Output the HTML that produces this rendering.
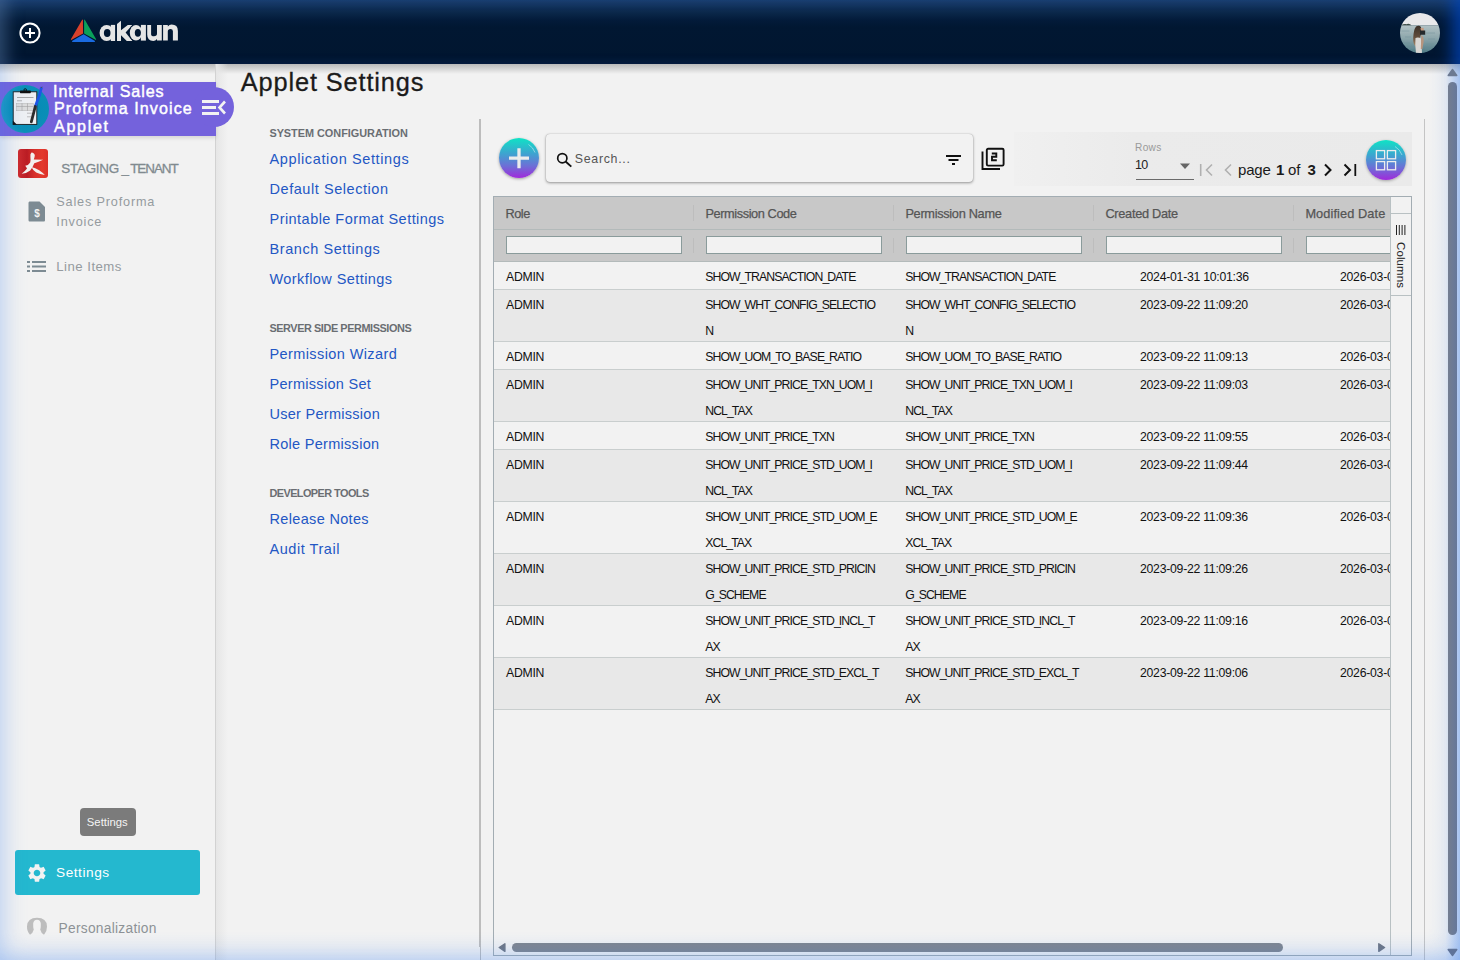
<!DOCTYPE html>
<html><head><meta charset="utf-8">
<style>
*{box-sizing:border-box;margin:0;padding:0}
html,body{width:1460px;height:960px;overflow:hidden;background:#f2f2f2;font-family:"Liberation Sans",sans-serif}
.a{position:absolute;white-space:nowrap}
#hdr{position:absolute;left:0;top:0;width:1460px;height:64px;background:linear-gradient(#193b65 0,#13335c 6px,#0a2749 13px,#031b3a 20px,#011732 27px,#011630 60px,#000f26 64px);overflow:hidden;z-index:10}
#hdr .gl{position:absolute;left:0;top:0;width:1460px;height:64px;box-shadow:inset 16px 0 16px -9px rgba(85,120,165,.5), inset -16px 0 16px -8px rgba(0,70,190,.75)}
#hshadow{position:absolute;left:0;top:64px;width:1460px;height:10px;background:linear-gradient(#b9b9b9,rgba(242,242,242,0))}
#sb{position:absolute;left:0;top:64px;width:216px;height:896px;border-right:1px solid #d2d2d2}
#sbsh{position:absolute;left:216px;top:64px;width:12px;height:896px;background:linear-gradient(90deg,#e6e6e6,rgba(242,242,242,0))}
.lnk{position:absolute;left:269.5px;font-size:14.5px;letter-spacing:.4px;color:#2357c4;white-space:nowrap}
.sec{position:absolute;left:269.4px;font-size:10.9px;letter-spacing:-.2px;font-weight:bold;color:#6a6e72;white-space:nowrap}
.th{position:absolute;top:205.9px;font-size:12.75px;letter-spacing:-.46px;color:#555;white-space:nowrap;-webkit-text-stroke:.25px #555}
.td{position:absolute;font-size:12.25px;color:#111;white-space:nowrap}
.cd{letter-spacing:-.9px}.cd i{font-style:normal;letter-spacing:-2px}.ad{letter-spacing:-.28px}.dt{letter-spacing:-.26px}
</style></head><body>

<!-- header -->
<div id="hdr"><div class="gl"></div>
  <svg class="a" style="left:19px;top:22px" width="22" height="22" viewBox="0 0 22 22"><circle cx="11" cy="11" r="9.6" fill="none" stroke="#fff" stroke-width="2"/><path d="M11 6v10M6 11h10" stroke="#fff" stroke-width="2"/></svg>
  <svg class="a" style="left:0;top:0" width="200" height="64" viewBox="0 0 200 64">
    <path d="M82.9 19.6 L83.1 33.4 L71.2 40 Q70.6 39.9 71 39.1 L81.9 20.2 Q82.3 19.5 82.9 19.6Z" fill="#d9412b"/>
    <path d="M84.1 19.6 L84.1 33.4 L96 40 Q96.4 39.9 96 39.1 L85.1 20.2 Q84.7 19.5 84.1 19.6Z" fill="#0aa05a"/>
    <path d="M83.6 34.3 L95 40.9 Q95.3 42 94.2 42 L72.8 42 Q71.7 42 72 40.9 Z" fill="#1a6be2"/>
    <g fill="#e5e5e5">
      <ellipse cx="106.6" cy="32.95" rx="7" ry="8.05"/><rect x="110.8" y="24.9" width="4.3" height="16.1"/>
      <path d="M117 23.9 L121 20.8 L121 41 L117 41Z"/>
      <path d="M121 30.2 L127.8 24.9 L132.4 24.9 L125.6 32.6 L132.4 41 L126.8 41 L121 35.3Z"/>
      <ellipse cx="136" cy="32.75" rx="7.2" ry="8.9" fill="#011732"/>
      <ellipse cx="136" cy="32.75" rx="6.2" ry="7.85"/><rect x="140.9" y="24.9" width="5" height="15.7"/>
      <path d="M147.2 24.9 H151.1 V34.2 Q151.1 36.3 154 36.3 Q157 36.3 157 33.5 V24.9 H161.8 V40.6 H157 V39 Q155.5 40.9 153.3 40.9 Q147.2 40.9 147.2 34.5Z"/>
      <path d="M163.1 40.6 V24.9 H167.8 V26.5 Q169.3 24.6 171.6 24.6 Q177.9 24.6 177.9 31 V40.6 H172.9 V31.3 Q172.9 29.1 170.4 29.1 Q167.8 29.1 167.8 31.6 V40.6Z"/>
    </g>
    <g fill="#011732"><ellipse cx="107.2" cy="33.05" rx="3.3" ry="4"/><ellipse cx="137.85" cy="32.8" rx="3.05" ry="3.9"/></g>
  </svg>
  <svg class="a" style="left:1400px;top:13px" width="40" height="40" viewBox="0 0 40 40">
    <defs><clipPath id="avc"><circle cx="20" cy="20" r="20"/></clipPath>
    <linearGradient id="sea" x1="0" y1="0" x2="0" y2="1"><stop offset="0" stop-color="#b3c2c5"/><stop offset=".45" stop-color="#8ea7ac"/><stop offset="1" stop-color="#4e7a85"/></linearGradient>
    <linearGradient id="hair" x1="0" y1="0" x2="0" y2="1"><stop offset="0" stop-color="#3b3129"/><stop offset=".5" stop-color="#5e4a3a"/><stop offset="1" stop-color="#a98c6c"/></linearGradient></defs>
    <g clip-path="url(#avc)">
      <rect width="40" height="12.2" fill="#e9e9eb"/>
      <rect y="12.2" width="40" height="28" fill="url(#sea)"/>
      <path d="M1.5 18h8M26 20h9M5 24h6M28 26h7M3 30h7M26 31h8M8 35h6M25 36h8" stroke="#6f9199" stroke-width=".8" opacity=".6"/>
      <path d="M1 12.3 Q4 10.6 6.5 11.2 Q8.5 10.3 10.5 11.6 L11.5 12.3Z" fill="#3a4a44"/>
      <path d="M16 13.5 Q19 12 21 14 L21.5 20 Q20 24 19 28 Q17.5 33 15.5 33.5 Q13 31 13.2 25 Q13.5 17 16 13.5Z" fill="url(#hair)"/>
      <path d="M15.5 25 Q18.5 24 21 25.5 L22 40 L16 40 Q14.8 32 15.5 25Z" fill="#d9d6d3"/>
      <path d="M20.5 15 L23.5 14.8 L24.5 19.5 L21.5 20.5Z" fill="#c49c84"/>
      <path d="M20 17.6 L25.2 17.6 L25.2 21.8 L20 21.8Z" fill="#25292c"/>
      <path d="M21.3 22 Q24 23.5 23.6 29 L22.3 36 L20.8 36 Z" fill="#b8957e"/>
    </g>
  </svg>
</div>
<div id="hshadow"></div>

<!-- sidebar -->
<div id="sb"></div>
<div id="sbsh"></div>

<!-- applet band -->
<div class="a" style="left:0;top:82px;width:216px;height:54px;background:#7462dc;box-shadow:0 2px 4px rgba(0,0,0,.12)"></div>
<div class="a" style="left:194px;top:87px;width:40px;height:40px;border-radius:50%;background:#7462dc"></div>
<div class="a" style="left:1px;top:85px;width:48px;height:48px;border-radius:50%;background:radial-gradient(circle at 70% 50%,#078bb5,#0b90b8 60%,#2aa0c9)"></div>
<svg class="a" style="left:0;top:82px" width="50" height="54" viewBox="0 82 50 54">
  <rect x="13.2" y="91.8" width="23.6" height="32.6" fill="#eef0f3" stroke="#1a1a1a" stroke-width=".9"/>
  <path d="M12.8 120.6 L12.8 124.8 L17 124.8 Z" fill="#111"/>
  <rect x="20" y="90.6" width="10.8" height="2.6" rx=".6" fill="#111"/>
  <circle cx="25.2" cy="90" r="1.3" fill="none" stroke="#111" stroke-width=".9"/>
  <path d="M17 97.5h16.5" stroke="#777" stroke-width=".6"/><path d="M17 100.8h5" stroke="#888" stroke-width=".6"/>
  <rect x="16.3" y="103.3" width="17" height="7.5" fill="#dcdcdc" stroke="#aaa" stroke-width=".4"/>
  <path d="M22 103.3v7.5M27.5 103.3v7.5M16.3 106.5h17" stroke="#999" stroke-width=".5"/>
  <path d="M27 113.2h5M27 116.8h4" stroke="#999" stroke-width=".6"/>
  <path d="M41.3 88.2 L39.5 95 L35.3 106.5" stroke="#1c55e6" stroke-width="2.8" fill="none" stroke-linecap="round"/>
  <path d="M41 88 l1.2 -1.2" stroke="#555" stroke-width="1"/>
  <path d="M35.3 106.5 L31.3 121.8" stroke="#2c2c2c" stroke-width="2.8" stroke-linecap="round"/>
</svg>
<div class="a" style="left:53px;top:81.7px;font-size:16.09px;letter-spacing:.95px;color:#fff;-webkit-text-stroke:.45px #fff">Internal Sales</div><div class="a" style="left:54px;top:99.3px;font-size:16.09px;letter-spacing:1.08px;color:#fff;-webkit-text-stroke:.45px #fff">Proforma Invoice</div><div class="a" style="left:54px;top:117.4px;font-size:16.09px;letter-spacing:1.7px;color:#fff;-webkit-text-stroke:.45px #fff">Applet</div>
<svg class="a" style="left:202px;top:100px" width="24" height="16" viewBox="0 0 24 16">
  <path d="M0 1.5h17M0 7.5h14M0 13.5h17" stroke="#f2f2f2" stroke-width="3"/>
  <path d="M23 1.5 L17.5 7.5 L23 13.5" stroke="#f2f2f2" stroke-width="2.6" fill="none"/>
</svg>

<!-- tenant -->
<div class="a" style="left:18px;top:149px;width:30px;height:29px;border-radius:3px;background:linear-gradient(90deg,#d02a2c 0,#bb1d24 30%,#d7302b 55%,#e3392c 80%,#dc3029)"></div>
<svg class="a" style="left:18px;top:149.7px" width="30" height="28.3" viewBox="0 0 30 28.3"><path d="M13.5 2.5 Q16.5 2.8 16.8 5.5 Q16.6 7.5 15.8 9.4 L25.1 9.8 Q20.5 12 16.3 13.3 Q14.7 17.5 12.2 20.5 Q8.5 23.6 3.6 23.8 Q7 21.5 9 18.6 Q8.2 17 7.2 15.8 Q10.6 15.4 12.2 12.5 Q12.8 9.5 12.4 6.5 Q12 3.8 13.5 2.5Z M13.4 17 Q17.2 17.6 21.2 20.3 Q24.6 22.7 26.8 25 Q22 24.3 18.2 22.4 Q15 20.6 13.4 17Z" fill="#f3f0ee"/></svg>
<div class="a" id="tenant" style="left:61.3px;top:160.8px;font-size:13.45px;letter-spacing:-.26px;color:#808a8f;-webkit-text-stroke:.3px #808a8f">STAGING<span style="margin:0 1.5px 0 2.5px">_</span><span style="letter-spacing:-1.05px">TENANT</span></div>

<svg class="a" style="left:28px;top:201px" width="18" height="21" viewBox="0 0 18 21"><path d="M2 0.5h9.5l5.5 5.5v13c0 1-.5 1.5-1.5 1.5h-13.5c-1 0-1.5-.5-1.5-1.5v-17c0-1 .5-1.5 1.5-1.5z" fill="#7d8b93"/><text x="9" y="15.5" font-family="Liberation Sans" font-weight="bold" font-size="10" fill="#f2f2f2" text-anchor="middle">$</text></svg>
<div class="a" id="spi" style="left:56.3px;top:195px;font-size:12.7px;letter-spacing:.82px;color:#959b9f">Sales Proforma</div><div class="a" style="left:56.3px;top:215px;font-size:12.7px;letter-spacing:.82px;color:#959b9f">Invoice</div>
<svg class="a" style="left:27px;top:261px" width="20" height="12" viewBox="0 0 20 12"><path d="M0 1h3M5 1h14M0 5.5h3M5 5.5h14M0 10h3M5 10h14" stroke="#7d8b93" stroke-width="1.8"/></svg>
<div class="a" id="li" style="left:56.3px;top:258.9px;font-size:13.2px;letter-spacing:.47px;color:#959b9f">Line Items</div>

<!-- tooltip / settings / personalization -->
<div class="a" style="left:80px;top:808px;width:56px;height:28px;border-radius:4px;background:#7b7b7b"></div>
<div class="a" id="tt" style="left:86.8px;top:815.5px;font-size:11.27px;letter-spacing:.03px;color:#f4f4f4">Settings</div>
<div class="a" style="left:15px;top:850px;width:185px;height:45px;border-radius:3px;background:#24b8cf"></div>
<svg class="a" style="left:26px;top:862px" width="22" height="22" viewBox="0 0 24 24"><path fill="#f2f2f2" d="M19.14 12.94c.04-.3.06-.61.06-.94 0-.32-.02-.64-.07-.94l2.03-1.58a.49.49 0 0 0 .12-.61l-1.92-3.32a.488.488 0 0 0-.59-.22l-2.39.96c-.5-.38-1.03-.7-1.62-.94l-.36-2.54a.484.484 0 0 0-.48-.41h-3.84c-.24 0-.43.17-.47.41l-.36 2.54c-.59.24-1.13.57-1.62.94l-2.39-.96c-.22-.08-.47 0-.59.22L2.74 8.87c-.12.21-.08.47.12.61l2.03 1.58c-.05.3-.09.63-.09.94s.02.64.07.94l-2.03 1.58a.49.49 0 0 0-.12.61l1.92 3.32c.12.22.37.29.59.22l2.39-.96c.5.38 1.03.7 1.62.94l.36 2.54c.05.24.24.41.48.41h3.84c.24 0 .44-.17.47-.41l.36-2.54c.59-.24 1.13-.56 1.62-.94l2.39.96c.22.08.47 0 .59-.22l1.92-3.32c.12-.22.07-.47-.12-.61l-2.01-1.58zM12 15.6c-1.98 0-3.6-1.62-3.6-3.6s1.62-3.6 3.6-3.6 3.6 1.62 3.6 3.6-1.62 3.6-3.6 3.6z"/></svg>
<div class="a" id="set" style="left:56px;top:864.5px;font-size:13.66px;letter-spacing:.54px;color:#fff">Settings</div>
<svg class="a" style="left:20px;top:910px" width="36" height="30" viewBox="20 910 36 30"><path d="M30 934.8 Q26.8 931 27 926.5 Q27.3 917.8 37 917.8 Q46.8 917.8 47 926.5 Q47.2 931 44 934.8 Q41 933 40.2 929.5 Q40.8 928 40.8 926 L40.8 923.5 Q40.5 919.7 37 919.7 Q33.5 919.7 33.2 923.5 L33.2 926 Q33.2 928 33.8 929.5 Q33 933 30 934.8Z" fill="#bdbdbd"/></svg>
<div class="a" id="pers" style="left:58.5px;top:921px;font-size:13.77px;letter-spacing:.27px;color:#8d9296">Personalization</div>

<!-- middle panel -->
<div class="a" id="title" style="left:240.8px;top:67.7px;font-size:25.36px;letter-spacing:.86px;color:#1b1b1b;-webkit-text-stroke:.3px #1b1b1b">Applet Settings</div>
<div class="a" style="left:479px;top:119px;width:2px;height:828px;background:#bdbdbd"></div><div class="a" style="left:480px;top:947px;width:1px;height:13px;background:#bdbdbd"></div>
<div class="sec" style="top:127.3px;letter-spacing:-0.026px">SYSTEM CONFIGURATION</div>
<div class="lnk" style="top:151px;letter-spacing:0.626px">Application Settings</div>
<div class="lnk" style="top:181px;letter-spacing:0.556px">Default Selection</div>
<div class="lnk" style="top:211px;letter-spacing:0.458px">Printable Format Settings</div>
<div class="lnk" style="top:241px;letter-spacing:0.564px">Branch Settings</div>
<div class="lnk" style="top:271px;letter-spacing:0.425px">Workflow Settings</div>
<div class="sec" style="top:322.2px;letter-spacing:-0.427px">SERVER SIDE PERMISSIONS</div>
<div class="lnk" style="top:346px;letter-spacing:0.400px">Permission Wizard</div>
<div class="lnk" style="top:376px;letter-spacing:0.292px">Permission Set</div>
<div class="lnk" style="top:406px;letter-spacing:0.279px">User Permission</div>
<div class="lnk" style="top:436px;letter-spacing:0.286px">Role Permission</div>
<div class="sec" style="top:487px;letter-spacing:-0.550px">DEVELOPER TOOLS</div>
<div class="lnk" style="top:511px;letter-spacing:0.333px">Release Notes</div>
<div class="lnk" style="top:541px;letter-spacing:0.550px">Audit Trail</div>

<!-- content right border -->
<div class="a" style="left:1424px;top:119px;width:1px;height:841px;background:#c4c4c4"></div>

<!-- TABLE START -->
<div class="a" style="left:493px;top:196px;width:919px;height:760px;border:1px solid #a3adb3;background:#f2f2f2;overflow:hidden">
</div>
<div class="a" style="left:494px;top:197px;width:896px;height:758px;overflow:hidden"><div class="a" style="left:-494px;top:-197px;width:1460px;height:960px">
<div class="a" style="left:494px;top:197px;width:896px;height:32px;background:#c8c8c8"></div>
<div class="a" style="left:494px;top:229px;width:896px;height:1px;background:#b3baba"></div>
<div class="a" style="left:494px;top:230px;width:896px;height:31px;background:#c8c8c8"></div>
<div class="a" style="left:494px;top:261px;width:896px;height:1px;background:#b3baba"></div>
<div class="th" style="left:505.4px;letter-spacing:-0.46px">Role</div>
<div class="a" style="left:506px;top:236px;width:176px;height:18px;border:1px solid #8a9b9b;background:#f2f2f2"></div>
<div class="th" style="left:705.4px;letter-spacing:-0.4px">Permission Code</div>
<div class="a" style="left:706px;top:236px;width:176px;height:18px;border:1px solid #8a9b9b;background:#f2f2f2"></div>
<div class="a" style="left:693px;top:205px;width:1px;height:16px;background:#bdbdbd"></div>
<div class="a" style="left:693px;top:238px;width:1px;height:15px;background:#bdbdbd"></div>
<div class="th" style="left:905.4px;letter-spacing:-0.3px">Permission Name</div>
<div class="a" style="left:906px;top:236px;width:176px;height:18px;border:1px solid #8a9b9b;background:#f2f2f2"></div>
<div class="a" style="left:893px;top:205px;width:1px;height:16px;background:#bdbdbd"></div>
<div class="a" style="left:893px;top:238px;width:1px;height:15px;background:#bdbdbd"></div>
<div class="th" style="left:1105.4px;letter-spacing:-0.28px">Created Date</div>
<div class="a" style="left:1106px;top:236px;width:176px;height:18px;border:1px solid #8a9b9b;background:#f2f2f2"></div>
<div class="a" style="left:1093px;top:205px;width:1px;height:16px;background:#bdbdbd"></div>
<div class="a" style="left:1093px;top:238px;width:1px;height:15px;background:#bdbdbd"></div>
<div class="th" style="left:1305.4px;letter-spacing:0.1px">Modified Date</div>
<div class="a" style="left:1306px;top:236px;width:176px;height:18px;border:1px solid #8a9b9b;background:#f2f2f2"></div>
<div class="a" style="left:1293px;top:205px;width:1px;height:16px;background:#bdbdbd"></div>
<div class="a" style="left:1293px;top:238px;width:1px;height:15px;background:#bdbdbd"></div>
<div class="a" style="left:494px;top:262px;width:896px;height:27px;background:#f2f2f2"></div>
<div class="a" style="left:494px;top:289px;width:896px;height:1px;background:#c9cece"></div>
<div class="td ad" style="left:506px;top:270.4px">ADMIN</div>
<div class="td cd" style="left:705.2px;top:270.4px">SHOW<i>_</i>TRANSACTION<i>_</i>DATE</div>
<div class="td cd" style="left:905.2px;top:270.4px">SHOW<i>_</i>TRANSACTION<i>_</i>DATE</div>
<div class="td dt" style="left:1140px;top:270.4px">2024-01-31 10:01:36</div>
<div class="td dt" style="left:1340px;top:270.4px;width:50px;overflow:hidden">2026-03-06 10:00:00</div>
<div class="a" style="left:494px;top:290px;width:896px;height:51px;background:#e8e8e8"></div>
<div class="a" style="left:494px;top:341px;width:896px;height:1px;background:#c9cece"></div>
<div class="td ad" style="left:506px;top:298.4px">ADMIN</div>
<div class="td cd" style="left:705.2px;top:298.4px">SHOW<i>_</i>WHT<i>_</i>CONFIG<i>_</i>SELECTIO</div>
<div class="td cd" style="left:705.2px;top:324.4px">N</div>
<div class="td cd" style="left:905.2px;top:298.4px">SHOW<i>_</i>WHT<i>_</i>CONFIG<i>_</i>SELECTIO</div>
<div class="td cd" style="left:905.2px;top:324.4px">N</div>
<div class="td dt" style="left:1140px;top:298.4px">2023-09-22 11:09:20</div>
<div class="td dt" style="left:1340px;top:298.4px;width:50px;overflow:hidden">2026-03-06 10:00:00</div>
<div class="a" style="left:494px;top:342px;width:896px;height:27px;background:#f2f2f2"></div>
<div class="a" style="left:494px;top:369px;width:896px;height:1px;background:#c9cece"></div>
<div class="td ad" style="left:506px;top:350.4px">ADMIN</div>
<div class="td cd" style="left:705.2px;top:350.4px">SHOW<i>_</i>UOM<i>_</i>TO<i>_</i>BASE<i>_</i>RATIO</div>
<div class="td cd" style="left:905.2px;top:350.4px">SHOW<i>_</i>UOM<i>_</i>TO<i>_</i>BASE<i>_</i>RATIO</div>
<div class="td dt" style="left:1140px;top:350.4px">2023-09-22 11:09:13</div>
<div class="td dt" style="left:1340px;top:350.4px;width:50px;overflow:hidden">2026-03-06 10:00:00</div>
<div class="a" style="left:494px;top:370px;width:896px;height:51px;background:#e8e8e8"></div>
<div class="a" style="left:494px;top:421px;width:896px;height:1px;background:#c9cece"></div>
<div class="td ad" style="left:506px;top:378.4px">ADMIN</div>
<div class="td cd" style="left:705.2px;top:378.4px">SHOW<i>_</i>UNIT<i>_</i>PRICE<i>_</i>TXN<i>_</i>UOM<i>_</i>I</div>
<div class="td cd" style="left:705.2px;top:404.4px">NCL<i>_</i>TAX</div>
<div class="td cd" style="left:905.2px;top:378.4px">SHOW<i>_</i>UNIT<i>_</i>PRICE<i>_</i>TXN<i>_</i>UOM<i>_</i>I</div>
<div class="td cd" style="left:905.2px;top:404.4px">NCL<i>_</i>TAX</div>
<div class="td dt" style="left:1140px;top:378.4px">2023-09-22 11:09:03</div>
<div class="td dt" style="left:1340px;top:378.4px;width:50px;overflow:hidden">2026-03-06 10:00:00</div>
<div class="a" style="left:494px;top:422px;width:896px;height:27px;background:#f2f2f2"></div>
<div class="a" style="left:494px;top:449px;width:896px;height:1px;background:#c9cece"></div>
<div class="td ad" style="left:506px;top:430.4px">ADMIN</div>
<div class="td cd" style="left:705.2px;top:430.4px">SHOW<i>_</i>UNIT<i>_</i>PRICE<i>_</i>TXN</div>
<div class="td cd" style="left:905.2px;top:430.4px">SHOW<i>_</i>UNIT<i>_</i>PRICE<i>_</i>TXN</div>
<div class="td dt" style="left:1140px;top:430.4px">2023-09-22 11:09:55</div>
<div class="td dt" style="left:1340px;top:430.4px;width:50px;overflow:hidden">2026-03-06 10:00:00</div>
<div class="a" style="left:494px;top:450px;width:896px;height:51px;background:#e8e8e8"></div>
<div class="a" style="left:494px;top:501px;width:896px;height:1px;background:#c9cece"></div>
<div class="td ad" style="left:506px;top:458.4px">ADMIN</div>
<div class="td cd" style="left:705.2px;top:458.4px">SHOW<i>_</i>UNIT<i>_</i>PRICE<i>_</i>STD<i>_</i>UOM<i>_</i>I</div>
<div class="td cd" style="left:705.2px;top:484.4px">NCL<i>_</i>TAX</div>
<div class="td cd" style="left:905.2px;top:458.4px">SHOW<i>_</i>UNIT<i>_</i>PRICE<i>_</i>STD<i>_</i>UOM<i>_</i>I</div>
<div class="td cd" style="left:905.2px;top:484.4px">NCL<i>_</i>TAX</div>
<div class="td dt" style="left:1140px;top:458.4px">2023-09-22 11:09:44</div>
<div class="td dt" style="left:1340px;top:458.4px;width:50px;overflow:hidden">2026-03-06 10:00:00</div>
<div class="a" style="left:494px;top:502px;width:896px;height:51px;background:#f2f2f2"></div>
<div class="a" style="left:494px;top:553px;width:896px;height:1px;background:#c9cece"></div>
<div class="td ad" style="left:506px;top:510.4px">ADMIN</div>
<div class="td cd" style="left:705.2px;top:510.4px">SHOW<i>_</i>UNIT<i>_</i>PRICE<i>_</i>STD<i>_</i>UOM<i>_</i>E</div>
<div class="td cd" style="left:705.2px;top:536.4px">XCL<i>_</i>TAX</div>
<div class="td cd" style="left:905.2px;top:510.4px">SHOW<i>_</i>UNIT<i>_</i>PRICE<i>_</i>STD<i>_</i>UOM<i>_</i>E</div>
<div class="td cd" style="left:905.2px;top:536.4px">XCL<i>_</i>TAX</div>
<div class="td dt" style="left:1140px;top:510.4px">2023-09-22 11:09:36</div>
<div class="td dt" style="left:1340px;top:510.4px;width:50px;overflow:hidden">2026-03-06 10:00:00</div>
<div class="a" style="left:494px;top:554px;width:896px;height:51px;background:#e8e8e8"></div>
<div class="a" style="left:494px;top:605px;width:896px;height:1px;background:#c9cece"></div>
<div class="td ad" style="left:506px;top:562.4px">ADMIN</div>
<div class="td cd" style="left:705.2px;top:562.4px">SHOW<i>_</i>UNIT<i>_</i>PRICE<i>_</i>STD<i>_</i>PRICIN</div>
<div class="td cd" style="left:705.2px;top:588.4px">G<i>_</i>SCHEME</div>
<div class="td cd" style="left:905.2px;top:562.4px">SHOW<i>_</i>UNIT<i>_</i>PRICE<i>_</i>STD<i>_</i>PRICIN</div>
<div class="td cd" style="left:905.2px;top:588.4px">G<i>_</i>SCHEME</div>
<div class="td dt" style="left:1140px;top:562.4px">2023-09-22 11:09:26</div>
<div class="td dt" style="left:1340px;top:562.4px;width:50px;overflow:hidden">2026-03-06 10:00:00</div>
<div class="a" style="left:494px;top:606px;width:896px;height:51px;background:#f2f2f2"></div>
<div class="a" style="left:494px;top:657px;width:896px;height:1px;background:#c9cece"></div>
<div class="td ad" style="left:506px;top:614.4px">ADMIN</div>
<div class="td cd" style="left:705.2px;top:614.4px">SHOW<i>_</i>UNIT<i>_</i>PRICE<i>_</i>STD<i>_</i>INCL<i>_</i>T</div>
<div class="td cd" style="left:705.2px;top:640.4px">AX</div>
<div class="td cd" style="left:905.2px;top:614.4px">SHOW<i>_</i>UNIT<i>_</i>PRICE<i>_</i>STD<i>_</i>INCL<i>_</i>T</div>
<div class="td cd" style="left:905.2px;top:640.4px">AX</div>
<div class="td dt" style="left:1140px;top:614.4px">2023-09-22 11:09:16</div>
<div class="td dt" style="left:1340px;top:614.4px;width:50px;overflow:hidden">2026-03-06 10:00:00</div>
<div class="a" style="left:494px;top:658px;width:896px;height:51px;background:#e8e8e8"></div>
<div class="a" style="left:494px;top:709px;width:896px;height:1px;background:#c9cece"></div>
<div class="td ad" style="left:506px;top:666.4px">ADMIN</div>
<div class="td cd" style="left:705.2px;top:666.4px">SHOW<i>_</i>UNIT<i>_</i>PRICE<i>_</i>STD<i>_</i>EXCL<i>_</i>T</div>
<div class="td cd" style="left:705.2px;top:692.4px">AX</div>
<div class="td cd" style="left:905.2px;top:666.4px">SHOW<i>_</i>UNIT<i>_</i>PRICE<i>_</i>STD<i>_</i>EXCL<i>_</i>T</div>
<div class="td cd" style="left:905.2px;top:692.4px">AX</div>
<div class="td dt" style="left:1140px;top:666.4px">2023-09-22 11:09:06</div>
<div class="td dt" style="left:1340px;top:666.4px;width:50px;overflow:hidden">2026-03-06 10:00:00</div>
</div></div>
<div class="a" style="left:1390px;top:197px;width:21px;height:758px;border-left:1px solid #b9c1c3;background:#f2f2f2"></div>
<div class="a" style="left:1391px;top:213px;width:20px;height:83px;border-top:1px solid #b9c1c3;border-bottom:1px solid #b9c1c3"></div>
<svg class="a" style="left:1396px;top:225px" width="10" height="10" viewBox="0 0 10 10"><path d="M0.5 0v10M3.3 0v10M6.1 0v10M8.9 0v10" stroke="#222" stroke-width="1"/></svg>
<div class="a" style="left:1394px;top:241.5px;width:13px;height:47px"><div class="a" id="coltxt" style="left:13px;top:0;transform-origin:0 0;transform:rotate(90deg);font-size:11.5px;color:#222;letter-spacing:.1px">Columns</div></div>
<svg class="a" style="left:497px;top:942px" width="10" height="12" viewBox="0 0 10 12"><path d="M7.9 1.8 L2.2 5.5 L7.9 9.3 Z" fill="#6f7784" stroke="#6f7784" stroke-width="1.4" stroke-linejoin="round"/></svg>
<div class="a" style="left:512px;top:943px;width:771px;height:9px;border-radius:4.5px;background:#80868f"></div>
<svg class="a" style="left:1377px;top:942px" width="10" height="12" viewBox="0 0 10 12"><path d="M1.8 1.8 L7.6 5.5 L1.8 9.3 Z" fill="#6f7784" stroke="#6f7784" stroke-width="1.4" stroke-linejoin="round"/></svg>
<div class="a" style="left:1014px;top:132px;width:398px;height:54px;background:linear-gradient(90deg,#f0f0f0,#ebebeb 30%,#eaeaea)"></div>
<div class="a" style="left:499px;top:138px;width:40px;height:40px;border-radius:50%;background:linear-gradient(#0fe3c5,#3fa2d0 40%,#6d6fd6 70%,#a02adb);box-shadow:0 1px 3px rgba(0,0,0,.35)"></div>
<svg class="a" style="left:499px;top:138px" width="40" height="40" viewBox="0 0 40 40"><path d="M10 20.2h20M20 10.2v20" stroke="#ececec" stroke-width="3.3"/><path d="M29.5 6.5 A16 16 0 0 1 36 14.5" stroke="rgba(255,255,255,.55)" stroke-width=".8" fill="none"/></svg>
<div class="a" style="left:545.5px;top:133.5px;width:427.5px;height:48.5px;border-radius:4px;background:#f2f2f2;box-shadow:0 1px 3px rgba(0,0,0,.38),0 0 1px rgba(0,0,0,.3)"></div>
<svg class="a" style="left:556px;top:152px" width="17" height="16" viewBox="0 0 17 16"><circle cx="6.3" cy="6.2" r="4.6" stroke="#111" stroke-width="1.7" fill="none"/><path d="M9.6 9.5 L15.3 14.6" stroke="#111" stroke-width="1.9"/></svg>
<div class="a" id="search" style="left:574.8px;top:151.8px;font-size:12.39px;letter-spacing:.69px;color:#555">Search...</div>
<svg class="a" style="left:945px;top:154px" width="17" height="12" viewBox="0 0 17 12"><path d="M1 2h15M3.5 6h10M7 10h3" stroke="#111" stroke-width="2"/></svg>
<svg class="a" style="left:981px;top:147px" width="24" height="24" viewBox="0 0 24 24"><path d="M1.5 4.5v17.5h17.5" stroke="#111" stroke-width="1.9" fill="none"/><rect x="5.8" y="1.8" width="16.8" height="16.8" rx="1.3" stroke="#111" stroke-width="1.9" fill="none"/><path d="M10.8 6.5h4.5v3.3h-4.3v3.4h4.8" stroke="#111" stroke-width="1.9" fill="none"/></svg>
<div class="a" id="rows" style="left:1135px;top:141.5px;font-size:10.15px;letter-spacing:.33px;color:#9a9a9a">Rows</div>
<div class="a" id="ten" style="left:1135px;top:158px;font-size:12.5px;letter-spacing:-.6px;color:#222">10</div>
<div class="a" style="left:1136px;top:179px;width:58px;height:1px;background:#6a6a6a"></div>
<svg class="a" style="left:1179px;top:163px" width="12" height="7" viewBox="0 0 12 7"><path d="M1 0.5h10L6 6Z" fill="#666"/></svg>
<svg class="a" style="left:1198px;top:162px" width="36" height="16" viewBox="0 0 36 16"><path d="M2.7 2v12" stroke="#b0b0b0" stroke-width="1.6"/><path d="M14 2.5 L8.5 8 L14 13.5" stroke="#b0b0b0" stroke-width="1.6" fill="none"/><path d="M33 2.5 L27.5 8 L33 13.5" stroke="#b0b0b0" stroke-width="1.6" fill="none"/></svg>
<div class="a" id="page" style="left:1238px;top:161px;font-size:15px;letter-spacing:-.2px;color:#1a1a1a">page</div>
<div class="a" style="left:1276px;top:161px;font-size:15px;font-weight:bold;color:#1a1a1a">1</div>
<div class="a" style="left:1288px;top:161px;font-size:15px;letter-spacing:-.2px;color:#1a1a1a">of</div>
<div class="a" style="left:1307.5px;top:161px;font-size:15px;font-weight:bold;color:#1a1a1a">3</div>
<svg class="a" style="left:1322px;top:162px" width="36" height="16" viewBox="0 0 36 16"><path d="M3 2.5 L8.5 8 L3 13.5" stroke="#111" stroke-width="2" fill="none"/><path d="M22.5 2.5 L28 8 L22.5 13.5" stroke="#111" stroke-width="2" fill="none"/><path d="M33.3 2v12" stroke="#111" stroke-width="1.8"/></svg>
<div class="a" style="left:1366px;top:140px;width:40px;height:40px;border-radius:50%;background:linear-gradient(#0fe3c5,#3fa2d0 40%,#6d6fd6 70%,#a02adb);box-shadow:0 1px 3px rgba(0,0,0,.3)"></div>
<svg class="a" style="left:1366px;top:140px" width="40" height="40" viewBox="0 0 40 40"><g stroke="#eeeeee" stroke-width="1.3" fill="none"><rect x="10.4" y="10.6" width="8.2" height="8.2"/><rect x="21.4" y="10.6" width="8.2" height="8.2"/><rect x="10.4" y="21.6" width="8.2" height="8.2"/><rect x="21.4" y="21.6" width="8.2" height="8.2"/></g><path d="M29 6.5 A16 16 0 0 1 36 15" stroke="rgba(255,255,255,.55)" stroke-width=".8" fill="none"/></svg>
<svg class="a" style="left:1447px;top:68px;z-index:6" width="11" height="9" viewBox="0 0 11 9"><path d="M5.5 1.5 L9.8 7.5 H1.2Z" fill="#6c7a92" stroke="#6c7a92" stroke-width="1.4" stroke-linejoin="round"/></svg>
<div class="a" style="left:1448px;top:82px;width:9px;height:853px;border-radius:4.5px;background:linear-gradient(90deg,#747e91,#65789b);z-index:6"></div>
<svg class="a" style="left:1447px;top:948px;z-index:6" width="11" height="9" viewBox="0 0 11 9"><path d="M5.5 7.5 L9.8 1.5 H1.2Z" fill="#5f7399" stroke="#5f7399" stroke-width="1.4" stroke-linejoin="round"/></svg>
<div class="a" style="left:0;top:932px;width:1460px;height:28px;pointer-events:none;z-index:5;background:linear-gradient(rgba(60,130,240,0),rgba(60,130,240,.02) 50%,rgba(60,130,240,.07))"></div>
<div class="a" style="left:1428px;top:64px;width:32px;height:896px;pointer-events:none;z-index:5;background:linear-gradient(90deg,rgba(60,130,240,0),rgba(60,130,240,.04) 55%,rgba(60,130,240,.28))"></div>
<div class="a" style="left:0;top:-40px;width:1460px;height:1000px;pointer-events:none;z-index:5;box-shadow:inset 0 0 26px rgba(60,130,240,.4)"></div>
<!-- TABLE END -->
</body></html>
